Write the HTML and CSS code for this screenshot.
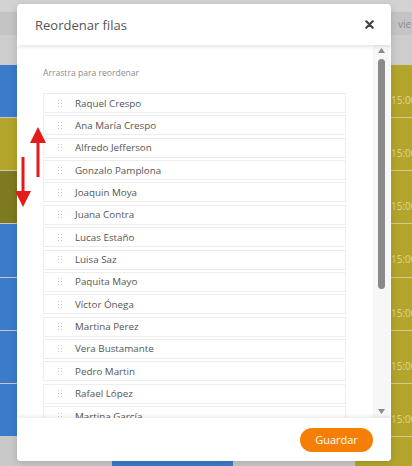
FILE: index.html
```html
<!DOCTYPE html>
<html lang="es">
<head>
<meta charset="utf-8">
<title>Reordenar filas</title>
<link rel="stylesheet" href="styles.css">
</head>
<body>
<div class="bg">
  <div class="bg-top"></div>
  <div class="bg-head"><span class="day">vie</span></div>
  <div class="bg-sub"></div>
  <div class="bg-main">
    <div class="col-left">
      <div class="blk blue"></div>
      <div class="blk yellow"></div>
      <div class="blk olive"></div>
      <div class="blk blue"></div>
      <div class="blk blue"></div>
      <div class="blk blue"></div>
      <div class="blk blue"></div>
    </div>
    <div class="col-mid"></div>
    <div class="col-right">
      <div class="blk yellow"><span class="time">15:00</span></div>
      <div class="blk yellow"><span class="time">15:00</span></div>
      <div class="blk yellow"><span class="time">15:00</span></div>
      <div class="blk yellow"><span class="time">15:00</span></div>
      <div class="blk yellow"><span class="time">15:00</span></div>
      <div class="blk yellow"><span class="time">15:00</span></div>
      <div class="blk yellow"><span class="time">15:00</span></div>
    </div>
  </div>
  <div class="bg-bottom">
    <div class="bb gray1"></div>
    <div class="bb blue2"></div>
    <div class="bb gray2"></div>
    <div class="bb yellow2"></div>
  </div>
</div>

<div class="modal">
  <div class="modal-header">
    <h2 class="modal-title">Reordenar filas</h2>
    <svg class="close" width="9" height="9" viewBox="0 0 9 9"><path d="M1.3 1.3 L7.7 7.7 M7.7 1.3 L1.3 7.7" stroke="#444" stroke-width="2.2" stroke-linecap="round"/></svg>
  </div>
  <div class="modal-body">
    <div class="list-wrap">
      <p class="hint">Arrastra para reordenar</p>
      <ul class="list">
        <li class="item"><span class="handle"></span>Raquel Crespo</li>
        <li class="item"><span class="handle"></span>Ana María Crespo</li>
        <li class="item"><span class="handle"></span>Alfredo Jefferson</li>
        <li class="item"><span class="handle"></span>Gonzalo Pamplona</li>
        <li class="item"><span class="handle"></span>Joaquin Moya</li>
        <li class="item"><span class="handle"></span>Juana Contra</li>
        <li class="item"><span class="handle"></span>Lucas Estaño</li>
        <li class="item"><span class="handle"></span>Luisa Saz</li>
        <li class="item"><span class="handle"></span>Paquita Mayo</li>
        <li class="item"><span class="handle"></span>Víctor Ónega</li>
        <li class="item"><span class="handle"></span>Martina Perez</li>
        <li class="item"><span class="handle"></span>Vera Bustamante</li>
        <li class="item"><span class="handle"></span>Pedro Martin</li>
        <li class="item"><span class="handle"></span>Rafael López</li>
        <li class="item"><span class="handle"></span>Martina García</li>
        <li class="item"><span class="handle"></span>Sergio Ruiz</li>
      </ul>
    </div>
    <div class="scrollbar">
      <svg class="sb-arrow" width="7" height="5" viewBox="0 0 7 5"><path d="M0 5 L3.5 0 L7 5 Z" fill="#8a8a8a"/></svg>
      <div class="sb-track"><div class="sb-thumb"></div></div>
      <svg class="sb-arrow" width="7" height="5" viewBox="0 0 7 5"><path d="M0 0 L7 0 L3.5 5 Z" fill="#8a8a8a"/></svg>
    </div>
  </div>
  <div class="modal-footer">
    <button class="btn-save">Guardar</button>
  </div>
</div>

<svg class="arrow-up" width="20" height="52" viewBox="0 0 20 52"><path d="M8.5 16 L8.5 50 L11.5 50 L11.5 16 L18 16 L10 0 L2 16 Z" fill="#e31b1b"/></svg>
<svg class="arrow-down" width="20" height="52" viewBox="0 0 20 52"><path d="M8.5 0 L8.5 34 L2 34 L10 50 L18 34 L11.5 34 L11.5 0 Z" fill="#e31b1b"/></svg>
</body>
</html>
```

FILE: styles.css
```css
* { box-sizing: border-box; }
html, body { margin: 0; padding: 0; }
body {
  width: 412px;
  height: 466px;
  overflow: hidden;
  position: relative;
  font-family: "Open Sans", "Noto Sans", sans-serif;
  background: #c9c9c9;
}

.bg { display: flex; flex-direction: column; height: 466px; }
.bg-top { height: 13px; background: #d2d2d2; border-bottom: 1px solid #c0c0c0; }
.bg-head { height: 22px; background: #c4c4c4; display: flex; align-items: center; justify-content: flex-end; }
.day { font-size: 10px; color: #8a8a8a; width: 14px; overflow: hidden; white-space: nowrap; }
.bg-sub { height: 30px; background: #cdcdcd; }
.bg-main { display: flex; height: 372px; }
.col-left { width: 17px; display: flex; flex-direction: column; }
.col-mid { flex: 1; background: #c9c9c9; }
.col-right { width: 21px; display: flex; flex-direction: column; overflow: hidden; }
.blk { height: 53.2px; border-bottom: 1px solid #c9c9c9; position: relative; }
.col-right .blk { border-bottom-color: #d3cc8a; }
.blue { background: #3b7bca; }
.yellow { background: #b3a52b; }
.olive { background: #7e7a1f; }
.time { display: block; padding-top: 28px; font-size: 10px; color: #dcd6a0; white-space: nowrap; }
.bg-bottom { display: flex; flex: 1; }
.bb { height: 100%; }
.gray1 { width: 112px; background: #c9c9c9; }
.blue2 { width: 121px; background: #3b7bca; }
.gray2 { width: 122px; background: #c9c9c9; }
.yellow2 { flex: 1; background: #b3a52b; }

/* modal */
.modal {
  position: absolute;
  left: 17px;
  top: 4px;
  width: 374px;
  height: 457px;
  background: #fff;
  border-radius: 4px;
  display: flex;
  flex-direction: column;
  overflow: hidden;
  box-shadow: 0 2px 8px rgba(0,0,0,0.15);
}
.modal-header {
  height: 41px;
  flex: none;
  display: flex;
  align-items: center;
  justify-content: space-between;
  padding: 0 17px 0 18px;
  box-shadow: 0 2px 4px rgba(0,0,0,0.10);
  position: relative;
  z-index: 2;
}
.modal-title { margin: 0; font-size: 13px; font-weight: 400; color: #555; }
.modal-body { flex: 1; display: flex; min-height: 0; }
.list-wrap { flex: 1; overflow: hidden; padding: 22px 27px 0 26px; }
.hint { margin: 0 0 13px; font-size: 8.6px; color: #8c8c8c; line-height: 13px; }
.list { list-style: none; margin: 0; padding: 0; }
.item {
  height: 20px;
  margin-bottom: 2.36px;
  border: 1px solid #eeeeee;
  display: flex;
  align-items: center;
  font-size: 9.8px;
  color: #555;
  padding-left: 13px;
}
.handle {
  width: 6px;
  height: 9px;
  margin-right: 12px;
  background-image: radial-gradient(circle, #c8c8c8 0.8px, transparent 1px);
  background-size: 3px 3px;
  background-position: 0 0;
}
.scrollbar {
  width: 17px;
  margin-right: 1px;
  background: #f7f7f7;
  display: flex;
  flex-direction: column;
  align-items: center;
  padding: 3px 0 4px;
}
.sb-arrow { flex: none; }
.sb-track { flex: 1; width: 7px; padding: 6px 0 0; }
.sb-thumb { width: 7px; height: 230px; background: #8a8a8a; border-radius: 4px; }
.modal-footer {
  height: 43px;
  flex: none;
  display: flex;
  align-items: center;
  justify-content: flex-end;
  padding-right: 18px;
  box-shadow: 0 -2px 4px rgba(0,0,0,0.08);
  position: relative;
  z-index: 2;
  background: #fff;
}
.btn-save {
  height: 24px;
  width: 73px;
  border: none;
  border-radius: 12px;
  background: #f57f05;
  color: #fff;
  font-family: inherit;
  font-size: 11px;
  padding: 0;
}

/* annotation arrows */
.arrow-up { position: absolute; left: 28px; top: 127px; }
.arrow-down { position: absolute; left: 13px; top: 157px; }
```
